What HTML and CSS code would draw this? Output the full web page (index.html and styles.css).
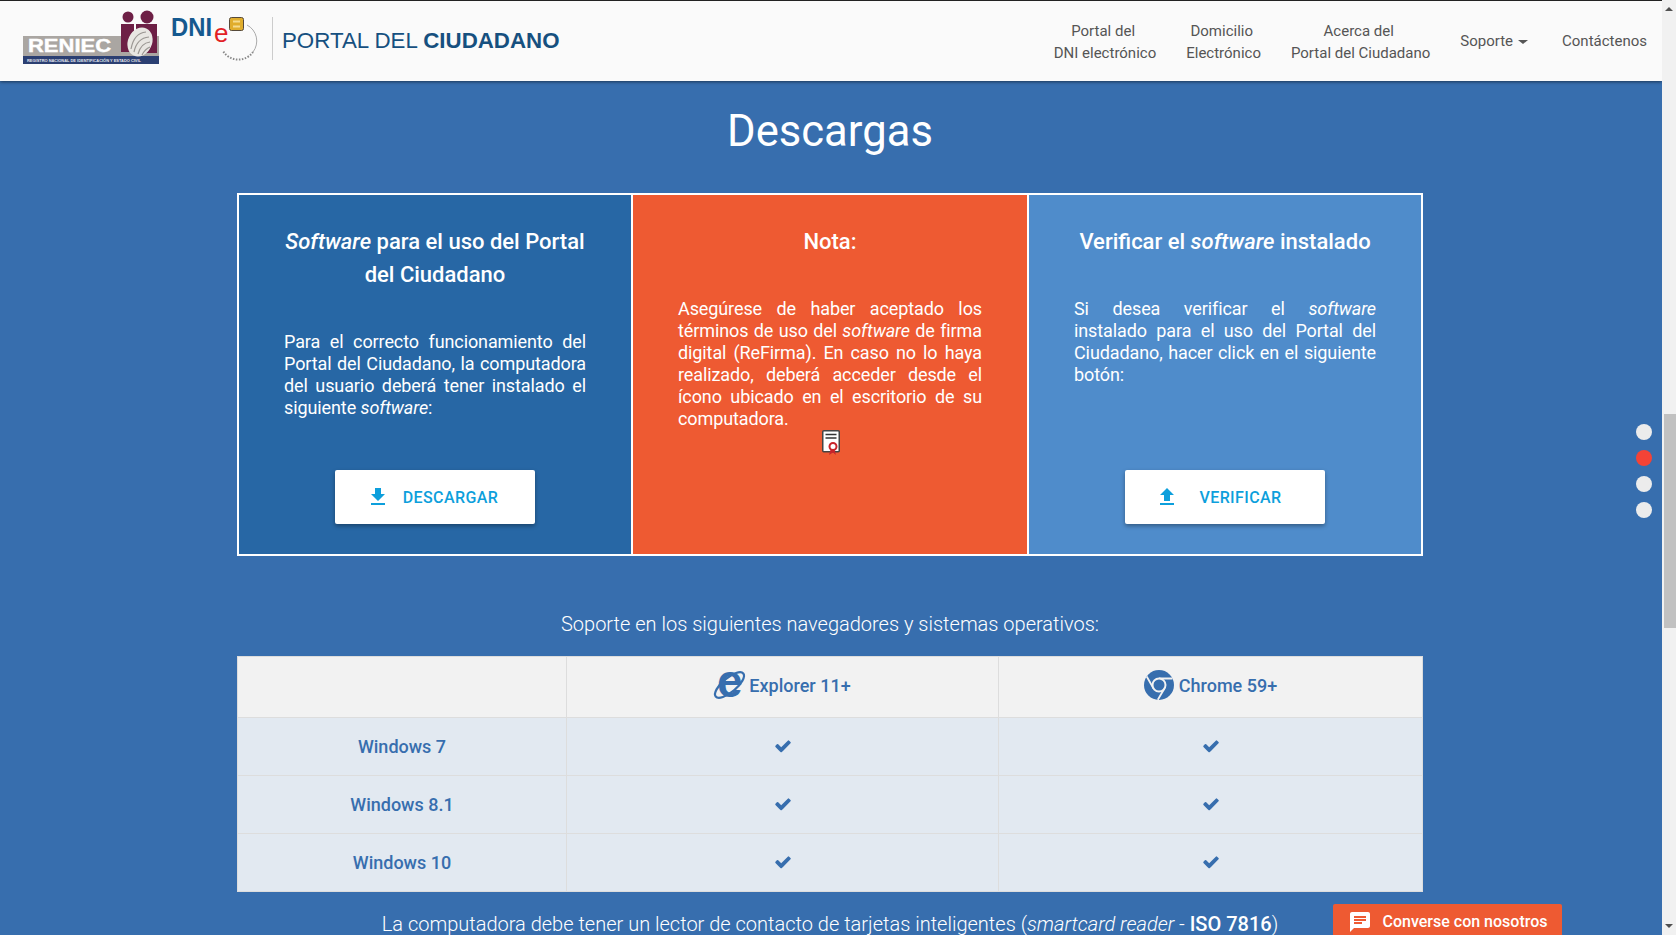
FILE: index.html
```html
<!DOCTYPE html>
<html lang="es">
<head>
  <meta charset="UTF-8">
  <meta name="viewport" content="width=device-width, initial-scale=1.0">
  <title>Portal del Ciudadano - Descargas</title>
  <link rel="stylesheet" href="styles.css">
</head>
<body>

  <svg class="sprites" width="0" height="0">
    <symbol id="check" viewBox="0 0 1792 1792">
      <path d="M1671 566q0 40-28 68l-724 724-136 136q-28 28-68 28t-68-28l-136-136-362-362q-28-28-28-68t28-68l136-136q28-28 68-28t68 28l294 295 656-657q28-28 68-28t68 28l136 136q28 28 28 68z"/>
    </symbol>
  </svg>

  <div class="page">
    <!-- Header -->
    <header class="topbar">
      <div class="brand">
        <svg class="logo-reniec" width="140" height="56" viewBox="0 0 140 56">
          <rect x="0" y="26" width="136" height="20" fill="#aaa6a2"/>
          <rect x="0" y="46" width="136" height="8" fill="#2b3f72"/>
          <circle cx="105" cy="7" r="5.5" fill="#6d1f45"/>
          <circle cx="124" cy="7" r="6.5" fill="#6d1f45"/>
          <path d="M98 14h13v28h-13z" fill="#6d1f45"/>
          <path d="M113 14h21v29h-21z" fill="#6d1f45"/>
          <ellipse cx="117" cy="32" rx="12" ry="15" transform="rotate(25 117 32)" fill="#e8e6e2"/>
          <path d="M108 39q3-16 15-17M111 42q3-14 15-15M115 44q3-11 12-12M119 45q3-6 8-8" fill="none" stroke="#9a9692" stroke-width="1.2"/>
          <text x="5" y="42" textLength="83" lengthAdjust="spacingAndGlyphs" class="logo-reniec-name">RENIEC</text>
          <text x="4" y="51.5" textLength="114" lengthAdjust="spacingAndGlyphs" class="logo-reniec-sub">REGISTRO NACIONAL DE IDENTIFICACIÓN Y ESTADO CIVIL</text>
        </svg>
        <svg class="logo-dni" width="92" height="52" viewBox="0 0 92 52">
          <path d="M76 13A18 18 0 0 1 82 40" fill="none" stroke="#aaa" stroke-width="1"/>
          <path d="M82 40A18 18 0 0 1 52 39" fill="none" stroke="#888" stroke-width="2" stroke-dasharray="1.5 1.5"/>
          <text x="0" y="24" textLength="41" lengthAdjust="spacingAndGlyphs" class="logo-dni-name">DNI</text>
          <text x="43" y="30" class="logo-dni-e">e</text>
          <rect x="58.500" y="5.500" width="14" height="13" rx="2" fill="#e0ad2c" stroke="#55493a" stroke-width="1"/>
          <path d="M62 9.500h7M62 14.500h7" stroke="#f5dc8e" stroke-width="2"/>
        </svg>
        <span class="brand-sep"></span>
        <h1 class="brand-title">PORTAL DEL <b>CIUDADANO</b></h1>
      </div>
      <nav class="menu">
        <a href="#" class="menu-two">Portal del&nbsp;<br>DNI electrónico</a>
        <a href="#" class="menu-two">Domicilio&nbsp;<br>Electrónico</a>
        <a href="#" class="menu-two">Acerca del&nbsp;<br>Portal del Ciudadano</a>
        <a href="#" class="menu-drop">Soporte</a>
        <a href="#">Contáctenos</a>
      </nav>
    </header>

    <!-- Downloads -->
    <main class="content">
      <h2 class="page-title">Descargas</h2>

      <div class="panels">
        <section class="panel panel-dark">
          <h3><em>Software</em> para el uso del Portal del Ciudadano</h3>
          <p>Para el correcto funcionamiento del Portal del Ciudadano, la computadora del usuario deberá tener instalado el siguiente <em>software</em>:</p>
          <a href="#" class="btn">
            <svg width="24" height="24" viewBox="0 0 24 24"><path d="M19 9h-4V3H9v6H5l7 7 7-7zM5 18v2h14v-2H5z"/></svg>
            DESCARGAR
          </a>
        </section>
        <section class="panel panel-orange">
          <h3>Nota:</h3>
          <p>Asegúrese de haber aceptado los términos de uso del <em>software</em> de firma digital (ReFirma). En caso no lo haya realizado, deberá acceder desde el ícono ubicado en el escritorio de su computadora.</p>
          <svg class="cert-icon" width="18" height="25" viewBox="0 0 18 25">
            <rect x="0.750" y="0.750" width="16.500" height="21" rx="1" fill="#fff" stroke="#444" stroke-width="1.500"/>
            <path d="M3.500 4.500h11M3.500 8h11" stroke="#333" stroke-width="1.500"/>
            <path d="M9 18l-2 7 4-2.500 3 2.500-2-7z" fill="#c8242b"/>
            <circle cx="11" cy="16.500" r="3.500" fill="#fff" stroke="#c8242b" stroke-width="2"/>
          </svg>
        </section>
        <section class="panel panel-light">
          <h3>Verificar el <em>software</em> instalado</h3>
          <p>Si desea verificar el <em>software</em> instalado para el uso del Portal del Ciudadano, hacer click en el siguiente botón:</p>
          <a href="#" class="btn btn-verify">
            <svg width="24" height="24" viewBox="0 0 24 24"><path d="M9 16h6v-6h4l-7-7-7 7h4zm-4 2h14v2H5z"/></svg>
            VERIFICAR
          </a>
        </section>
      </div>

      <p class="support-title">Soporte en los siguientes navegadores y sistemas operativos:</p>

      <table class="support">
        <thead>
          <tr>
            <th></th>
            <th>
              <span class="browser">
                <svg class="ie-icon" width="31" height="30" viewBox="0 0 31 30">
                  <ellipse cx="15.500" cy="15" rx="18" ry="7" transform="rotate(-40 15.500 15)" fill="none" stroke="#376eae" stroke-width="2.200"/>
                  <text x="3" y="27" class="ie-letter">e</text>
                </svg>
                Explorer 11+
              </span>
            </th>
            <th>
              <span class="browser browser-chrome">
                <svg width="30" height="30" viewBox="0 0 30 30">
                  <circle cx="15" cy="15" r="15" fill="#376eae"/>
                  <path d="M15 8.500H28.500M9.400 18.300L2.700 6.500M20.600 18.300L13.800 29.800" stroke="#f2f2f2" stroke-width="1.800"/>
                  <circle cx="15" cy="15" r="6.500" fill="#376eae" stroke="#f2f2f2" stroke-width="2"/>
                </svg>
                Chrome 59+
              </span>
            </th>
          </tr>
        </thead>
        <tbody>
          <tr>
            <td>Windows 7</td>
            <td><svg class="check"><use href="#check"/></svg></td>
            <td><svg class="check"><use href="#check"/></svg></td>
          </tr>
          <tr>
            <td>Windows 8.1</td>
            <td><svg class="check"><use href="#check"/></svg></td>
            <td><svg class="check"><use href="#check"/></svg></td>
          </tr>
          <tr>
            <td>Windows 10</td>
            <td><svg class="check"><use href="#check"/></svg></td>
            <td><svg class="check"><use href="#check"/></svg></td>
          </tr>
        </tbody>
      </table>

      <p class="reader-note">La computadora debe tener un lector de contacto de tarjetas inteligentes (<em>smartcard reader</em> - <b>ISO 7816</b>)</p>
    </main>

    <!-- Section dots -->
    <div class="dots">
      <span class="dot"></span>
      <span class="dot dot-active"></span>
      <span class="dot"></span>
      <span class="dot"></span>
    </div>

    <!-- Chat tab -->
    <a href="#" class="chat">
      <svg width="24" height="24" viewBox="0 0 24 24"><path d="M20 2H4c-1.100 0-1.990.9-1.990 2L2 22l4-4h14c1.100 0 2-.9 2-2V4c0-1.100-.9-2-2-2zM6 9h12v2H6V9zm8 5H6v-2h8v2zm4-6H6V6h12v2z"/></svg>
      Converse con nosotros
    </a>
  </div>

  <!-- Scrollbar -->
  <div class="scrollbar">
    <span class="scroll-up"></span>
    <span class="scroll-thumb"></span>
    <span class="scroll-down"></span>
  </div>

</body>
</html>
```

FILE: styles.css
```css
/* Global Styles */
html, body {
  height: 100%;
}

body {
  font-family: Roboto, Arial, sans-serif;
  margin: 0;
  display: flex;
  overflow: hidden;
  background-color: #376eae;
  color: #fff;
}

a {
  color: inherit;
  text-decoration: none;
}

.sprites {
  position: absolute;
}

.page {
  flex: 1;
  min-width: 0;
  height: 100vh;
  overflow: hidden;
  position: relative;
}

/* Header */
.topbar {
  height: 80px;
  border-top: 1px solid #222;
  background-color: #fafafa;
  display: flex;
  justify-content: space-between;
  align-items: center;
  box-shadow: 0 1px 3px rgba(0, 0, 0, 0.5);
  position: relative;
}

.brand {
  display: flex;
  align-items: center;
  padding-left: 23px;
}

.logo-reniec {
  margin-bottom: 6px;
}

.logo-reniec-name {
  font-family: "Liberation Sans", Arial, sans-serif;
  font-size: 18px;
  font-weight: 700;
  fill: #fff;
  stroke: #fff;
  stroke-width: 0.4px;
}

.logo-reniec-sub {
  font-family: "Liberation Sans", Arial, sans-serif;
  font-size: 4.400px;
  font-weight: 700;
  fill: #e4e6ee;
}

.logo-dni {
  margin: -6px 0 0 8px;
}

.logo-dni-name {
  font-family: "Liberation Sans", Arial, sans-serif;
  font-size: 26px;
  font-weight: 700;
  fill: #15598f;
}

.logo-dni-e {
  font-family: "Liberation Sans", Arial, sans-serif;
  font-size: 26px;
  fill: #e21f26;
}

.brand-sep {
  width: 1px;
  height: 43px;
  margin: 0 9px 5px 9px;
  background-color: #ccc;
}

.brand-title {
  margin: 0;
  font-family: "Liberation Sans", Arial, sans-serif;
  font-size: 22.300px;
  font-weight: 400;
  color: #16507f;
  white-space: nowrap;
}

.menu {
  display: flex;
  align-items: center;
  padding-right: 15px;
  gap: 30px;
}

.menu a {
  font-size: 15px;
  line-height: 22px;
  color: #555;
  text-align: center;
  white-space: nowrap;
}

.menu .menu-two {
  padding-top: 2px;
}

.menu .menu-drop {
  margin-right: 4px;
}

.menu-drop::after {
  content: "";
  display: inline-block;
  margin-left: 5px;
  vertical-align: 2px;
  border-top: 4px solid #555;
  border-left: 5px solid transparent;
  border-right: 5px solid transparent;
}

/* Content */
.content {
  width: 1186px;
  margin: 0 auto;
  position: relative;
  left: -1px;
}

.page-title {
  margin: 21px 0 0;
  font-size: 43.600px;
  line-height: 60px;
  font-weight: 400;
  text-align: center;
}

.panels {
  display: flex;
  margin-top: 31px;
  border: 2px solid #fff;
  height: 363px;
  box-sizing: border-box;
}

.panel {
  box-sizing: border-box;
  flex: 0 0 394px;
  display: flex;
  flex-direction: column;
  align-items: center;
  padding: 30px 45px 30px;
  border-right: 2px solid #fff;
}

.panel:last-child {
  flex-basis: 392px;
  border-right: none;
}

.panel-dark {
  background-color: #2767a5;
}

.panel-orange {
  flex-basis: 396px;
  background-color: #ee5a32;
}

.panel-light {
  background-color: #4f8ccb;
}

.panel h3 {
  margin: 0 0 40px;
  font-size: 22px;
  line-height: 33px;
  font-weight: 500;
  text-align: center;
}

.panel p {
  margin: 0;
  font-size: 18px;
  line-height: 22px;
  letter-spacing: -0.1px;
  text-align: justify;
}

.cert-icon {
  display: block;
  margin-left: 1px;
}

.btn {
  margin-top: auto;
  width: 200px;
  height: 54px;
  box-sizing: border-box;
  padding-right: 6px;
  display: flex;
  align-items: center;
  justify-content: center;
  gap: 13px;
  border-radius: 2px;
  background-color: #fff;
  box-shadow: 0 2px 4px rgba(0, 0, 0, 0.35);
  color: #0d9fdc;
  font-size: 16px;
  font-weight: 500;
  letter-spacing: 0.4px;
}

.btn-verify {
  padding-right: 13px;
  gap: 20px;
}

.btn svg {
  fill: #0d9fdc;
}

/* Support table */
.support-title {
  margin: 54px 0 0;
  font-size: 20px;
  line-height: 28px;
  font-weight: 300;
  text-align: center;
}

.support {
  width: 100%;
  margin-top: 18px;
  border-collapse: collapse;
  table-layout: fixed;
  color: #376eae;
  font-size: 18px;
  font-weight: 500;
  text-align: center;
}

.support th:nth-child(1) {
  width: 328px;
}

.support th:nth-child(2) {
  width: 431px;
}

.support th {
  height: 60px;
  padding: 0;
  background-color: #f2f2f2;
  font-weight: 500;
}

.support td {
  height: 57px;
  padding: 0;
  background-color: #e2e9f1;
}

.support th, .support td {
  border: 1px solid #ddd;
}

.browser {
  display: inline-flex;
  align-items: center;
  gap: 4px;
}

.browser-chrome {
  gap: 5px;
}

.ie-icon {
  overflow: visible;
}

.ie-letter {
  font-family: "Liberation Sans", Arial, sans-serif;
  font-size: 46px;
  font-weight: 700;
  fill: #376eae;
}

.check {
  display: block;
  width: 18px;
  height: 18px;
  margin: 0 auto 1px;
  fill: #376eae;
}

.reader-note {
  margin: 21px 0 0;
  font-size: 20px;
  line-height: 22px;
  font-weight: 300;
  text-align: center;
  white-space: nowrap;
}

.reader-note b {
  font-weight: 500;
}

/* Section dots */
.dots {
  position: absolute;
  top: 424px;
  right: 10px;
  display: flex;
  flex-direction: column;
  gap: 10px;
}

.dot {
  width: 16px;
  height: 16px;
  border-radius: 50%;
  background-color: #ececec;
}

.dot-active {
  background-color: #f44336;
}

/* Chat tab */
.chat {
  position: absolute;
  left: 1333px;
  bottom: 0;
  width: 229px;
  height: 31px;
  display: flex;
  align-items: flex-start;
  justify-content: center;
  gap: 11px;
  padding-top: 9px;
  box-sizing: border-box;
  border-radius: 2px 2px 0 0;
  background-color: #ee5a32;
  font-size: 16px;
  font-weight: 500;
  line-height: 18px;
}

.chat svg {
  fill: #fff;
  margin-top: -3px;
}

/* Scrollbar */
.scrollbar {
  width: 14px;
  flex-shrink: 0;
  height: 100vh;
  background-color: #f1f1f1;
  position: relative;
}

.scroll-thumb {
  position: absolute;
  top: 414px;
  left: 2px;
  right: 0;
  height: 214px;
  background-color: #c1c1c1;
}

.scroll-up, .scroll-down {
  position: absolute;
  left: 3px;
  border-left: 4px solid transparent;
  border-right: 4px solid transparent;
}

.scroll-up {
  top: 7px;
  border-bottom: 4px solid #505050;
}

.scroll-down {
  bottom: 7px;
  border-top: 4px solid #505050;
}
```
